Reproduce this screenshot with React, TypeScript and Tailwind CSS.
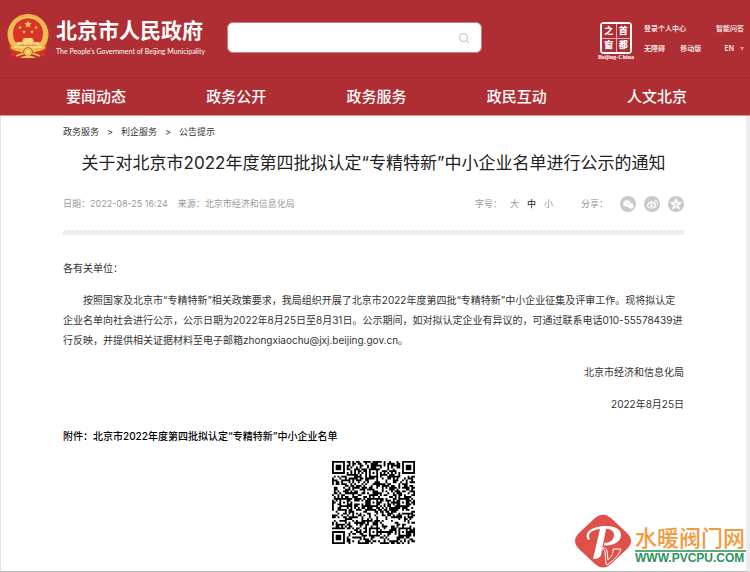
import type { ReactNode } from 'react';
import { Search } from 'lucide-react';
import { FaWeibo, FaWeixin } from 'react-icons/fa';

const NAV_ITEMS = ['要闻动态', '政务公开', '政务服务', '政民互动', '人文北京'];
const BREADCRUMBS = ['政务服务', '利企服务', '公告提示'];
const QR_SIZE = 45;

export default function App() {
  return (
    <div className="relative flex min-h-screen flex-col bg-white font-['Inter','Noto_Sans_CJK_SC',sans-serif] text-[#333]">
      <SiteHeader />
      <SiteNav />
      <main className="grow border-r-4 border-b border-l border-r-[#ececec] border-b-[#b8b8b8] border-l-[#e2e2e2] pt-2 pr-[62px] pl-[62px]">
        <Breadcrumb />
        <article>
          <h1 className="mt-[9px] text-center text-[17px] leading-7 whitespace-nowrap text-[#222]">
            关于对北京市2022年度第四批拟认定“专精特新”中小企业名单进行公示的通知
          </h1>
          <ArticleMeta />
          <div className="mt-[18px] h-[5px] bg-[linear-gradient(135deg,#f6f6f6_25%,#e6e6e6_25%_50%,#f6f6f6_50%_75%,#e6e6e6_75%)] bg-[length:4px_4px]" />
          <div className="pt-[23px] text-[10px] leading-5">
            <p>各有关单位：</p>
            <p className="mt-3 indent-5">
              按照国家及北京市“专精特新”相关政策要求，我局组织开展了北京市2022年度第四批“专精特新”中小企业征集及评审工作。现将拟认定企业名单向社会进行公示，公示日期为2022年8月25日至8月31日。公示期间，如对拟认定企业有异议的，可通过联系电话010-55578439进行反映，并提供相关证据材料至电子邮箱zhongxiaochu@jxj.beijing.gov.cn。
            </p>
            <p className="mt-3 text-right">北京市经济和信息化局</p>
            <p className="mt-3 text-right">2022年8月25日</p>
            <p className="mt-3 font-medium text-black">
              附件：<a href="#attachment">北京市2022年度第四批拟认定“专精特新”中小企业名单</a>
            </p>
          </div>
          <QrCode />
        </article>
      </main>
      <Watermark />
    </div>
  );
}

function SiteHeader() {
  return (
    <header className="flex h-[77px] items-start bg-[#ae2e33] px-1.5 text-white">
      <a href="#home" className="flex shrink-0 pt-3.5">
        <Emblem />
        <span className="ml-1.5 block w-[153px] whitespace-nowrap">
          <span className="block pt-[5px] text-[21px] leading-6 font-bold">北京市人民政府</span>
          <span className="block pt-0.5 font-['Lato'] text-[7px] leading-3">
            The People's Government of Beijing Municipality
          </span>
        </span>
      </a>
      <form className="relative mt-[22px] ml-[18px] w-[255px]" onSubmit={(e) => e.preventDefault()}>
        <input
          type="search"
          aria-label="搜索"
          className="block h-[31px] w-full rounded-md border border-[#c98083] bg-white pr-8 pl-3 text-xs text-gray-700 outline-none"
        />
        <button type="submit" aria-label="搜索" className="absolute top-2.5 right-3 text-[#ccc]">
          <Search size={12} strokeWidth={2.5} />
        </button>
      </form>
      <div className="ml-auto flex pt-[22px]">
        <CapitalWindow />
        <div className="ml-2.5 grid w-[100px] content-start gap-1.5 text-[7px] leading-[14px] font-medium">
          <div className="flex h-3.5 justify-between">
            <a href="#login">登录个人中心</a>
            <a href="#qa">智能问答</a>
          </div>
          <div className="flex h-3.5 justify-between">
            <a href="#accessible">无障碍</a>
            <a href="#mobile">移动版</a>
            <a href="#en" className="flex items-center gap-1.5 pl-2">
              EN
              <svg width="4" height="4" viewBox="0 0 4 4" aria-hidden="true">
                <path d="M0 0h4L2 4z" fill="#d99a66" />
              </svg>
            </a>
          </div>
        </div>
      </div>
    </header>
  );
}

function CapitalWindow() {
  return (
    <a href="#capital" className="flex w-9 flex-col items-center">
      <span className="grid h-8 w-8 grid-cols-2 grid-rows-2 gap-px rounded-sm border-2 border-white bg-[#e3b1b3]">
        {['之', '首', '窗', '都'].map((char) => (
          <span
            key={char}
            className="flex items-center justify-center bg-[#ae2e33] font-['Noto_Sans_CJK_SC'] text-[9px] leading-3 font-black"
          >
            {char}
          </span>
        ))}
      </span>
      <span className="font-['Liberation_Serif'] text-[6px] leading-[7px] font-bold whitespace-nowrap">Beijing-China</span>
    </a>
  );
}

function SiteNav() {
  return (
    <nav className="grid h-[39px] grid-cols-5 items-center border-t border-b border-t-[#9c292e] border-b-[#d98d90] bg-[#ae2e33] pt-px pr-[23px] pl-[26px] text-center text-[15px] font-medium text-white">
      {NAV_ITEMS.map((item) => (
        <a key={item} href="#nav">
          {item}
        </a>
      ))}
    </nav>
  );
}

function Breadcrumb() {
  return (
    <nav aria-label="面包屑" className="text-[9px] leading-4 text-[#333]">
      <ol className="flex gap-2">
        {BREADCRUMBS.map((item, i) => (
          <li key={item} className="flex gap-2">
            {i > 0 && <span>&gt;</span>}
            <a href="#crumb">{item}</a>
          </li>
        ))}
      </ol>
    </nav>
  );
}

function ArticleMeta() {
  return (
    <div className="mt-[19px] flex h-4 items-center text-[9px] text-[#999]">
      <span>日期：2022-08-25 16:24</span>
      <span className="ml-2.5">来源：北京市经济和信息化局</span>
      <div className="ml-auto flex items-center">
        <span>字号：</span>
        <button className="ml-2">大</button>
        <button className="ml-2 font-medium text-[#333]">中</button>
        <button className="ml-2">小</button>
      </div>
      <div className="ml-7 flex items-center">
        <span>分享：</span>
        <div className="ml-3 flex gap-2">
          <ShareButton label="微信">
            <FaWeixin size={11} />
          </ShareButton>
          <ShareButton label="微博">
            <FaWeibo size={11} />
          </ShareButton>
          <ShareButton label="QQ空间">
            <svg width="12" height="12" viewBox="0 0 12 12" aria-hidden="true">
              <path d={starPath(6, 6.3, 6)} fill="#fff" stroke="#fff" strokeWidth="0.6" strokeLinejoin="round" />
              <path d="M4 5.200h3.800L4.500 7.800h4" fill="none" stroke="#c9c9c9" strokeWidth="0.8" />
            </svg>
          </ShareButton>
        </div>
      </div>
    </div>
  );
}

function ShareButton({ label, children }: { label: string; children: ReactNode }) {
  return (
    <button aria-label={label} className="flex size-4 items-center justify-center rounded-full bg-[#c9c9c9] text-white">
      {children}
    </button>
  );
}

function starPath(cx: number, cy: number, r: number) {
  const points = Array.from({ length: 10 }, (_, i) => {
    const radius = i % 2 ? r * 0.45 : r;
    const angle = (Math.PI * i) / 5 - Math.PI / 2;
    return `${(cx + radius * Math.cos(angle)).toFixed(2)} ${(cy + radius * Math.sin(angle)).toFixed(2)}`;
  });
  return `M${points.join('L')}z`;
}

function Emblem() {
  return (
    <svg width="44" height="45" viewBox="0 0 44 45" className="shrink-0" aria-hidden="true">
      <circle cx="22" cy="20.5" r="20.5" fill="#efbf50" />
      <circle cx="22" cy="20.5" r="18.6" fill="none" stroke="#dda23c" strokeWidth="0.8" strokeDasharray="2 1.5" />
      <circle cx="22" cy="19.5" r="15.8" fill="#d8342a" stroke="#f9dc7c" strokeWidth="0.8" />
      <path d={starPath(22, 10.500, 4)} fill="#f8d04e" />
      <path
        d={starPath(14, 13.5, 1.9) + starPath(30, 13.5, 1.9) + starPath(18, 18, 1.9) + starPath(26, 18, 1.9)}
        fill="#f8d04e"
      />
      <path d="M18 24h8l1.500 2h-11zM16.500 26h11v2h-11zM10.500 28h23v3.500h-23zM8 32h28v2H8z" fill="#f8d87a" />
      <path d="M15 30h3M20.500 30h3M26 30h3" stroke="#dda23c" strokeWidth="0.8" />
      <path d="M3 28c1 4 4 6 8 7l7 2-4 7-4-3-5 2 1-5-3-3z" fill="#d8342a" />
      <path d="M41 28c-1 4-4 6-8 7l-7 2 4 7 4-3 5 2-1-5 3-3z" fill="#d8342a" />
      <path
        d="M5 33c4 4 9 3 14 5M39 33c-4 4-9 3-14 5M10 42l8-3M34 42l-8-3"
        fill="none"
        stroke="#f5c74f"
        strokeWidth="1.800"
      />
      <circle cx="22" cy="38" r="4.500" fill="#efbf50" stroke="#c8401f" strokeWidth="0.8" />
      <circle cx="22" cy="38" r="2" fill="#f9dc7c" />
      <path d="M14 44c3-3 13-3 16 0z" fill="#efbf50" />
    </svg>
  );
}

function ringDistance(x: number, y: number, cx: number, cy: number) {
  return Math.max(Math.abs(x - cx), Math.abs(y - cy));
}

function buildQrPath() {
  const finders = [[3, 3], [41, 3], [3, 41]];
  const alignments = [[22, 6], [6, 22], [22, 22], [38, 22], [22, 38], [38, 38]];
  let seed = 20220825;
  let path = '';
  for (let y = 0; y < QR_SIZE; y++) {
    for (let x = 0; x < QR_SIZE; x++) {
      seed = (Math.imul(seed, 1103515245) + 12345) & 0x7fffffff;
      let dark = ((seed >> 16) & 1) === 1;
      if (x === 6 || y === 6) dark = (x + y) % 2 === 0;
      for (const [cx, cy] of alignments) {
        const d = ringDistance(x, y, cx, cy);
        if (d <= 2) dark = d !== 1;
      }
      for (const [cx, cy] of finders) {
        const d = ringDistance(x, y, cx, cy);
        if (d <= 4) dark = d === 3 || d <= 1;
      }
      if (dark) path += `M${x} ${y}h1v1h-1z`;
    }
  }
  return path;
}

function QrCode() {
  return (
    <svg
      role="img"
      aria-label="附件二维码"
      viewBox={`0 0 ${QR_SIZE} ${QR_SIZE}`}
      className="mx-auto mt-[15px] size-[83px]"
    >
      <path d={buildQrPath()} fill="#000" />
    </svg>
  );
}

function Watermark() {
  return (
    <div className="absolute right-1 bottom-1 flex items-end">
      <svg width="56" height="54" viewBox="0 0 56 54" aria-hidden="true">
        <path d="M20 4Q28-3 36 4L52 19Q60 27 52 35L36 50Q28 57 20 50L4 35Q-4 27 4 19z" fill="#e0504b" />
        <path
          d="M13 26C9 20 14 14 25 12.500C37 11 46 14 46 21C46 28 38 32 29 31.500L29.500 29C36 29 39 25 39 21C39 16 34 14.500 31 15L26 41C25 44 22 45 18 45L25 15C16 16 12 20 15 25z"
          fill="#fff"
        />
        <path
          d="M26 35c2-2 6-1 6 2l1 9c3-3 6-7 5-11h8c-2 6-7 11-14 16l-1-1-1-12c0-2-2-3-4-3z"
          fill="#e0504b"
          stroke="#fff"
          strokeWidth="1"
        />
      </svg>
      <div className="mb-1 ml-1 w-[111px] whitespace-nowrap">
        <p className="border-b-2 border-[#5aab7e] text-[22px] leading-6 font-medium text-[#f19a3e]">水暖阀门网</p>
        <p className="font-['Liberation_Sans'] text-[12px] leading-3 font-bold text-[#2f9160]">WWW.PVCPU.COM</p>
      </div>
    </div>
  );
}
